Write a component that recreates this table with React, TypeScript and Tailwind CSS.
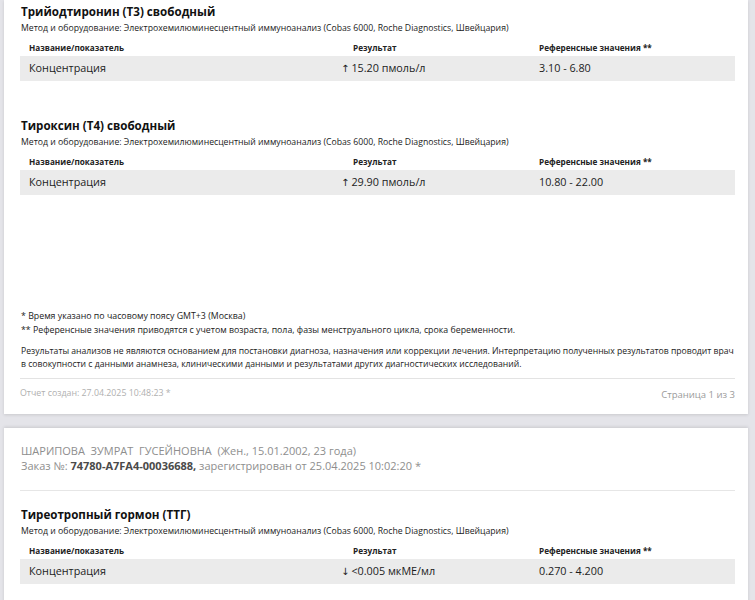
const FONT = { fontFamily: '"Open Sans", "Noto Sans", sans-serif' };

type Test = {
  title: string;
  value: string;
  dir: "up" | "down";
  ref: string;
};

const METHOD =
  "Метод и оборудование: Электрохемилюминесцентный иммуноанализ (Cobas 6000, Roche Diagnostics, Швейцария)";

function TestBlock({ test }: { test: Test }) {
  return (
    <div>
      {/* Title */}
      <div className="h-[22px] pt-[2px] flex items-center px-[17px] text-[11.6px] font-bold text-[#111]">
        {test.title}
      </div>
      {/* Method */}
      <div className="h-[14px] flex items-center px-[17px] text-[8.7px] text-[#222] whitespace-nowrap">
        {METHOD}
      </div>
      {/* Table header */}
      <div className="ml-[16px] mr-[13px] mt-[4px] h-[16px] grid grid-cols-[312px_198px_1fr] px-[9px] items-center text-[8.2px] font-bold text-[#222]">
        <div>Название/показатель</div>
        <div className="pl-[12px]">Результат</div>
        <div>Референсные значения **</div>
      </div>
      {/* Row */}
      <div className="ml-[16px] mr-[13px] h-[25px] bg-[#ebebeb] grid grid-cols-[312px_198px_1fr] px-[9px] items-center text-[10.8px] text-[#1c1c1c]">
        <div>Концентрация</div>
        <div className="flex items-center">
          <span
            className="text-[10px] mr-[2px] leading-none"
            style={{ fontFamily: '"DejaVu Sans", sans-serif' }}
          >
            {test.dir === "up" ? "↑" : "↓"}
          </span>
          <span>{test.value}</span>
        </div>
        <div>{test.ref}</div>
      </div>
    </div>
  );
}

const page1: Test[] = [
  { title: "Трийодтиронин (Т3) свободный", value: "15.20 пмоль/л", dir: "up", ref: "3.10 - 6.80" },
  { title: "Тироксин (Т4) свободный", value: "29.90 пмоль/л", dir: "up", ref: "10.80 - 22.00" },
];

export default function App() {
  return (
    <div
      className="w-[755px] h-[600px] overflow-hidden bg-[#e4e4e9] pl-[4px] pr-[7px]"
      style={FONT}
    >
      {/* Page 1 */}
      <div className="bg-white h-[414px] flex flex-col shadow-[0_1px_3px_rgba(0,0,0,0.12)]">
        <TestBlock test={page1[0]} />
        <div className="h-[33px]" />
        <TestBlock test={page1[1]} />

        {/* Footnotes */}
        <div className="px-[17px] mt-[115px] text-[8.8px] text-[#222] whitespace-nowrap">
          <div className="h-[14px] flex items-center">* Время указано по часовому поясу GMT+3 (Москва)</div>
          <div className="h-[14px] flex items-center">
            ** Референсные значения приводятся с учетом возраста, пола, фазы менструального цикла, срока беременности.
          </div>
          <div className="mt-[7px] leading-[13px] text-[8.65px]">
            Результаты анализов не являются основанием для постановки диагноза, назначения или коррекции лечения. Интерпретацию полученных результатов проводит врач
            <br />в совокупности с данными анамнеза, клиническими данными и результатами других диагностических исследований.
          </div>
        </div>
        <div className="ml-[16px] mr-[13px] mt-[7px] border-t border-[#e3e3e3]" />
        <div className="ml-[16px] mr-[13px] h-[30px] flex items-center justify-between">
          <span className="text-[8.8px] text-[#b0b0b0]">Отчет создан: 27.04.2025 10:48:23 *</span>
          <span className="text-[9.5px] text-[#9a9a9a] pt-[2px]">Страница 1 из 3</span>
        </div>
      </div>

      {/* Page 2 */}
      <div className="bg-white mt-[14px] h-[200px] shadow-[0_-1px_3px_rgba(0,0,0,0.12)]">
        <div className="pt-[15px] px-[17px] text-[11px] text-[#8e8e8e] whitespace-nowrap">
          <div className="h-[16px] flex items-center">
            ШАРИПОВА&nbsp; ЗУМРАТ&nbsp; ГУСЕЙНОВНА&nbsp; (Жен., 15.01.2002, 23 года)
          </div>
          <div className="h-[15px] flex items-center">
            Заказ №:&nbsp;<span className="font-bold text-[#4a4a4a]">74780-A7FA4-00036688,</span>&nbsp;зарегистрирован от 25.04.2025 10:02:20 *
          </div>
        </div>
        <div className="ml-[16px] mr-[13px] mt-[16px] border-t border-[#e6e6e6]" />
        <div className="h-[12px]" />
        <TestBlock
          test={{ title: "Тиреотропный гормон (ТТГ)", value: "<0.005 мкМЕ/мл", dir: "down", ref: "0.270 - 4.200" }}
        />
      </div>
    </div>
  );
}
